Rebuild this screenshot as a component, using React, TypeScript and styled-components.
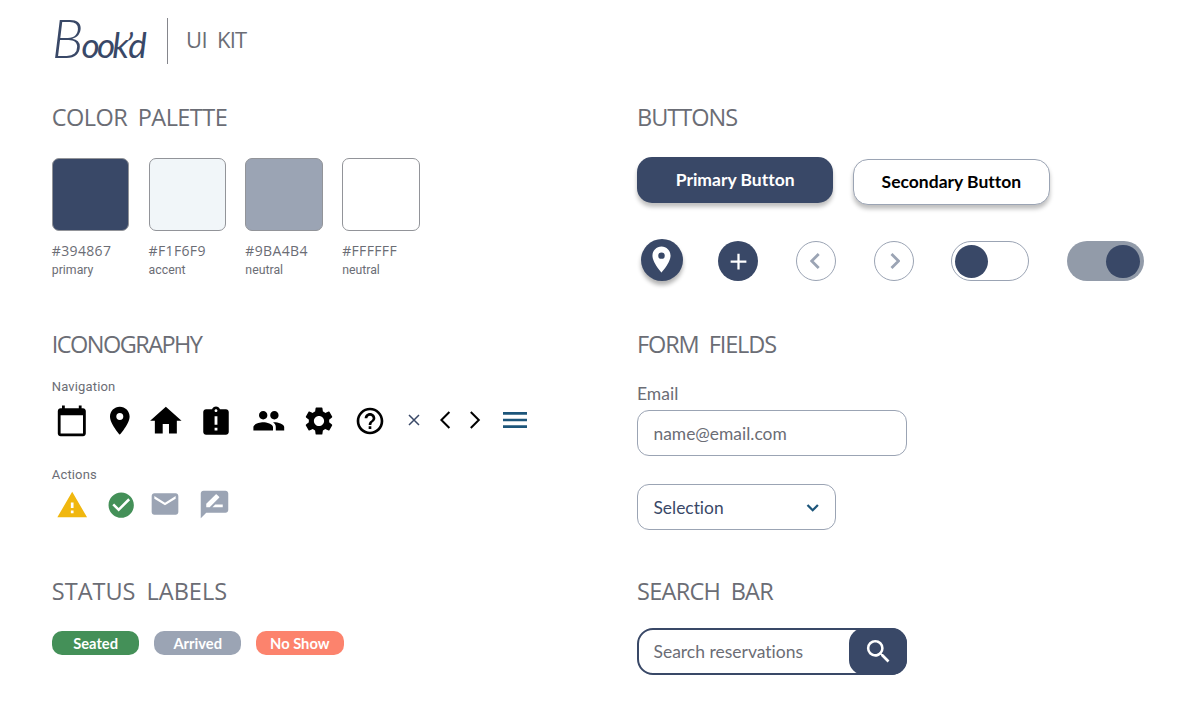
import React from "react";
import styled, { createGlobalStyle } from "styled-components";
import {
  MdCalendarToday, MdPlace, MdHome, MdAssignmentLate, MdPeople, MdSettings, MdHelpOutline,
  MdMenu, MdWarning, MdCheckCircle, MdMail, MdRateReview, MdSearch, MdAdd,
} from "react-icons/md";

const navy = "#394867";
const slate = "#9ba4b4";
const gray = "#6b6d75";

const Global = createGlobalStyle`
  * { box-sizing: border-box; }
  body {
    margin: 0;
    background: #fff;
    color: ${gray};
    font-family: Lato, sans-serif;
    font-variant-ligatures: none;
  }
  svg { display: block; flex: none; }
  button, input { font: inherit; font-variant-ligatures: none; margin: 0; }
`;

const Page = styled.main`
  width: 1200px;
  height: 706px;
  padding-left: 51.8px;
  overflow: hidden;
`;

const Header = styled.header`
  display: flex;
  height: 102px;
  padding-top: 18px;
`;

const Wordmark = styled.div`
  width: 115.8px;
  height: 46px;
  border-right: 1.5px solid #85868c;
  color: ${navy};
  font: italic 400 35px/40px Lato, sans-serif;
  letter-spacing: -2.8px;
  white-space: nowrap;
`;

const Initial = styled.span`
  font-size: 54px;
  font-weight: 300;
  letter-spacing: -2px;
`;

const Title = styled.h1<{ $track?: number }>`
  margin: 0;
  font: 400 23.5px/30px "Open Sans", sans-serif;
  letter-spacing: ${(p) => p.$track ?? -0.7}px;
  word-spacing: 5px;
  white-space: nowrap;
`;

const KitTitle = styled(Title)`
  margin: 6px 0 0 18.5px;
  font-size: 22px;
`;

const Heading = styled(Title).attrs({ as: "h2" })``;

const Board = styled.div`
  display: grid;
  grid-template-columns: 585.2px 1fr;
  grid-template-rows: 227px 247px 1fr;
`;

const Section = styled.section`
  display: flex;
  flex-direction: column;
  align-items: flex-start;
`;

const Swatches = styled.div`
  display: flex;
  gap: 19.4px;
  margin-top: 26.3px;
`;

const Swatch = styled.div`
  width: 77.4px;
`;

const Chip = styled.div<{ $color: string }>`
  height: 72.3px;
  margin-bottom: 10.5px;
  border: 1px solid #929499;
  border-radius: 7px;
  background: ${(p) => p.$color};
`;

const Code = styled.div`
  font: 14px/20px "Open Sans", sans-serif;
  letter-spacing: 0.35px;
`;

const Caption = styled.div<{ $top?: number }>`
  margin-top: ${(p) => p.$top ?? 0}px;
  font: 12.3px/18px Roboto, sans-serif;
`;

const GroupLabel = styled(Caption)`
  font-size: 13px;
  letter-spacing: 0.15px;
`;

const IconRow = styled.div<{ $top: number }>`
  display: flex;
  align-items: center;
  height: 40px;
  margin-top: ${(p) => p.$top}px;
`;

const Icon = styled.span<{ $size: number; $gap: number; $drop?: number; $color?: string }>`
  flex: none;
  width: ${(p) => p.$size}px;
  margin-left: ${(p) => p.$gap}px;
  margin-top: ${(p) => (p.$drop ?? 0) * 2}px;
  color: ${(p) => p.$color ?? "#000"};
  & > svg { width: 100%; height: auto; }
`;

const Pills = styled.div`
  display: flex;
  gap: 14.5px;
  margin-top: 25px;
`;

const Pill = styled.span<{ $color: string }>`
  width: 87.6px;
  height: 24px;
  border-radius: 10px;
  background: ${(p) => p.$color};
  color: #fff;
  font-size: 14.7px;
  font-weight: 700;
  line-height: 24px;
  text-align: center;
`;

const ButtonRow = styled.div`
  display: flex;
  gap: 20px;
  margin-top: 24.5px;
`;

const Button = styled.button<{ $secondary?: boolean }>`
  width: 196.3px;
  height: 46.5px;
  margin-top: ${(p) => (p.$secondary ? 2.2 : 0)}px;
  padding: 0;
  border: ${(p) => (p.$secondary ? `1.4px solid ${slate}` : "none")};
  border-radius: 15px;
  background: ${(p) => (p.$secondary ? "#fff" : navy)};
  color: ${(p) => (p.$secondary ? "#000" : "#fff")};
  font-size: 17.5px;
  font-weight: 700;
  box-shadow: 0 4px 4px rgba(0, 0, 0, 0.25);
`;

const ControlRow = styled.div`
  display: flex;
  align-items: center;
  height: 42px;
  margin-top: 34px;
  padding-left: 3.7px;
`;

const Round = styled.button<{ $size?: number; $gap?: number; $outline?: boolean; $raised?: boolean }>`
  display: flex;
  align-items: center;
  justify-content: center;
  width: ${(p) => p.$size ?? 40}px;
  height: ${(p) => p.$size ?? 40}px;
  margin-left: ${(p) => p.$gap ?? 0}px;
  margin-top: ${(p) => (p.$raised ? -1 : 2)}px;
  padding: 0;
  border: ${(p) => (p.$outline ? `1.4px solid ${slate}` : "none")};
  border-radius: 50%;
  background: ${(p) => (p.$outline ? "#fff" : navy)};
  color: ${(p) => (p.$outline ? slate : "#fff")};
  box-shadow: ${(p) => (p.$raised ? "0 4px 4px rgba(0, 0, 0, 0.3)" : "none")};
`;

const Toggle = styled.div<{ $on?: boolean }>`
  display: flex;
  align-items: center;
  justify-content: ${(p) => (p.$on ? "flex-end" : "flex-start")};
  width: 77.6px;
  height: 40px;
  margin-left: 37.7px;
  margin-top: 2px;
  padding: ${(p) => (p.$on ? "0 4.5px" : "0 2.8px")};
  border: ${(p) => (p.$on ? "none" : `1.4px solid ${slate}`)};
  border-radius: 20px;
  background: ${(p) => (p.$on ? "#929ba9" : "#fff")};
`;

const Knob = styled.span`
  width: 33.3px;
  height: 33.3px;
  border-radius: 50%;
  background: ${navy};
`;

const Label = styled.label`
  margin-top: 22.6px;
  font-size: 17.5px;
  line-height: 24px;
`;

const Field = styled.div<{ $width: number; $top: number; $color?: string }>`
  display: flex;
  align-items: center;
  justify-content: space-between;
  width: ${(p) => p.$width}px;
  height: 46.5px;
  margin-top: ${(p) => p.$top}px;
  padding: 0 15.5px;
  border: 1.4px solid ${slate};
  border-radius: 12px;
  color: ${(p) => p.$color ?? gray};
  font-size: 17.4px;
`;

const Chevron = styled.span`
  color: #1c557a;
`;

const SearchBar = styled.div`
  display: flex;
  align-items: center;
  justify-content: space-between;
  width: 270.5px;
  height: 46.5px;
  margin-top: 22px;
  padding-left: 14.5px;
  border: 2px solid ${navy};
  border-radius: 16px;
  font-size: 17.5px;
`;

const SearchButton = styled.button`
  display: flex;
  align-items: center;
  justify-content: center;
  width: 58px;
  height: 46.5px;
  margin-right: -2px;
  padding: 1px 0 0 1px;
  border: none;
  border-radius: 15px;
  background: ${navy};
  color: #fff;
`;

const palette = [
  { code: "#394867", name: "primary" },
  { code: "#F1F6F9", name: "accent" },
  { code: "#9BA4B4", name: "neutral" },
  { code: "#FFFFFF", name: "neutral" },
];

const Line = ({ w, h, d, stroke = 2 }: { w: number; h: number; d: string; stroke?: number }) => (
  <svg width={w} height={h} viewBox={`0 0 ${w} ${h}`} fill="none" stroke="currentColor" strokeWidth={stroke}>
    <path d={d} />
  </svg>
);

export default function App() {
  return (
    <Page>
      <Global />
      <Header>
        <Wordmark><Initial>B</Initial>ook’d</Wordmark>
        <KitTitle as="h1">UI KIT</KitTitle>
      </Header>
      <Board>
        <Section>
          <Heading $track={-0.55}>COLOR PALETTE</Heading>
          <Swatches>
            {palette.map((c) => (
              <Swatch key={c.code}>
                <Chip $color={c.code} />
                <Code>{c.code}</Code>
                <Caption>{c.name}</Caption>
              </Swatch>
            ))}
          </Swatches>
        </Section>

        <Section>
          <Heading $track={-1}>BUTTONS</Heading>
          <ButtonRow>
            <Button>Primary Button</Button>
            <Button $secondary>Secondary Button</Button>
          </ButtonRow>
          <ControlRow>
            <Round $size={42} $raised><MdPlace size={31} /></Round>
            <Round $gap={35.5}><MdAdd size={27} /></Round>
            <Round $gap={37.7} $outline><Line w={12} h={18} stroke={2.8} d="M8.7 2 1.7 9l7 7" /></Round>
            <Round $gap={37.7} $outline><Line w={12} h={18} stroke={2.8} d="m3.5 2 7 7-7 7" /></Round>
            <Toggle><Knob /></Toggle>
            <Toggle $on><Knob /></Toggle>
          </ControlRow>
        </Section>

        <Section>
          <Heading $track={-1.55}>ICONOGRAPHY</Heading>
          <GroupLabel $top={18.9}>Navigation</GroupLabel>
          <IconRow $top={5.3}>
            <Icon $size={33.6} $gap={2.8}><MdCalendarToday /></Icon>
            <Icon $size={33.6} $gap={14.8}><MdPlace /></Icon>
            <Icon $size={37.7} $gap={10.7}><MdHome /></Icon>
            <Icon $size={34} $gap={13.9} $drop={0.9}><MdAssignmentLate /></Icon>
            <Icon $size={33.6} $gap={19.1}><MdPeople /></Icon>
            <Icon $size={34} $gap={16.7}><MdSettings /></Icon>
            <Icon $size={32} $gap={18.1}><MdHelpOutline /></Icon>
            <Icon $size={12} $gap={21.4} $drop={-0.8} $color={navy}>
              <Line w={12} h={12} stroke={1.5} d="M1 1l10 10M11 1 1 11" />
            </Icon>
            <Icon $size={12} $gap={19} $drop={-1.3}><Line w={12} h={20} d="M10.4 2 2.4 10l8 8" /></Icon>
            <Icon $size={12} $gap={18} $drop={-1.3}><Line w={12} h={20} d="m1.8 2 8 8-8 8" /></Icon>
            <Icon $size={32} $gap={18.3} $drop={-1.3} $color="#1c557a"><MdMenu /></Icon>
          </IconRow>
          <GroupLabel $top={24.6}>Actions</GroupLabel>
          <IconRow $top={1.2}>
            <Icon $size={32.4} $gap={4} $drop={0.4} $color="#f0b70f"><MdWarning /></Icon>
            <Icon $size={30.4} $gap={17.5} $color="#449058"><MdCheckCircle /></Icon>
            <Icon $size={32} $gap={13.4} $drop={-0.8} $color={slate}><MdMail /></Icon>
            <Icon $size={33} $gap={17} $drop={-0.2} $color={slate}><MdRateReview /></Icon>
          </IconRow>
        </Section>

        <Section>
          <Heading $track={-1.1}>FORM FIELDS</Heading>
          <Label>Email</Label>
          <Field $width={270.5} $top={4.4}>name@email.com</Field>
          <Field $width={199.5} $top={27.3} $color={navy}>
            Selection
            <Chevron><Line w={14} h={10} stroke={2.3} d="m1.5 3 5.2 5.2L11.9 3" /></Chevron>
          </Field>
        </Section>

        <Section>
          <Heading $track={0}>STATUS LABELS</Heading>
          <Pills>
            <Pill $color="#449058">Seated</Pill>
            <Pill $color={slate}>Arrived</Pill>
            <Pill $color="#fc836d">No Show</Pill>
          </Pills>
        </Section>

        <Section>
          <Heading>SEARCH BAR</Heading>
          <SearchBar>
            Search reservations
            <SearchButton><MdSearch size={31} /></SearchButton>
          </SearchBar>
        </Section>
      </Board>
    </Page>
  );
}
